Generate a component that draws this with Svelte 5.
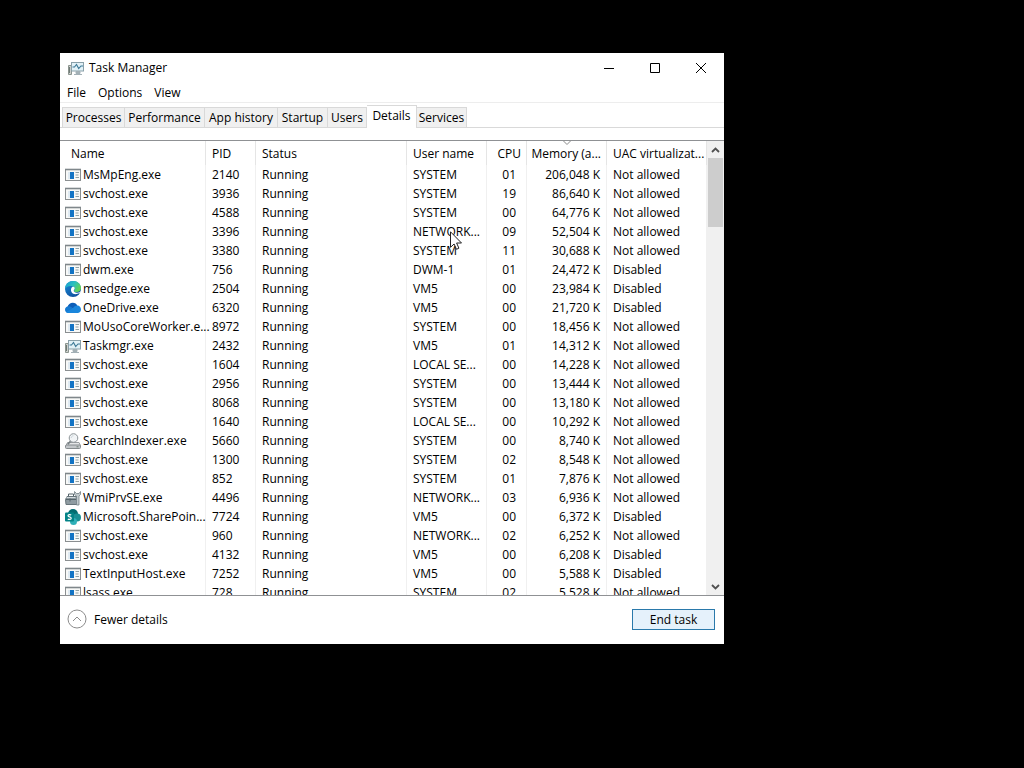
<script>
  const tabs = ['Processes', 'Performance', 'App history', 'Startup', 'Users', 'Details', 'Services'];
  let activeTab = $state('Details');

  const processes = [
    ['app', 'MsMpEng.exe', '2140', 'SYSTEM', '01', '206,048 K', 'Not allowed'],
    ['app', 'svchost.exe', '3936', 'SYSTEM', '19', '86,640 K', 'Not allowed'],
    ['app', 'svchost.exe', '4588', 'SYSTEM', '00', '64,776 K', 'Not allowed'],
    ['app', 'svchost.exe', '3396', 'NETWORK...', '09', '52,504 K', 'Not allowed'],
    ['app', 'svchost.exe', '3380', 'SYSTEM', '11', '30,688 K', 'Not allowed'],
    ['app', 'dwm.exe', '756', 'DWM-1', '01', '24,472 K', 'Disabled'],
    ['edge', 'msedge.exe', '2504', 'VM5', '00', '23,984 K', 'Disabled'],
    ['cloud', 'OneDrive.exe', '6320', 'VM5', '00', '21,720 K', 'Disabled'],
    ['app', 'MoUsoCoreWorker.e...', '8972', 'SYSTEM', '00', '18,456 K', 'Not allowed'],
    ['monitor', 'Taskmgr.exe', '2432', 'VM5', '01', '14,312 K', 'Not allowed'],
    ['app', 'svchost.exe', '1604', 'LOCAL SE...', '00', '14,228 K', 'Not allowed'],
    ['app', 'svchost.exe', '2956', 'SYSTEM', '00', '13,444 K', 'Not allowed'],
    ['app', 'svchost.exe', '8068', 'SYSTEM', '00', '13,180 K', 'Not allowed'],
    ['app', 'svchost.exe', '1640', 'LOCAL SE...', '00', '10,292 K', 'Not allowed'],
    ['search', 'SearchIndexer.exe', '5660', 'SYSTEM', '00', '8,740 K', 'Not allowed'],
    ['app', 'svchost.exe', '1300', 'SYSTEM', '02', '8,548 K', 'Not allowed'],
    ['app', 'svchost.exe', '852', 'SYSTEM', '01', '7,876 K', 'Not allowed'],
    ['tools', 'WmiPrvSE.exe', '4496', 'NETWORK...', '03', '6,936 K', 'Not allowed'],
    ['share', 'Microsoft.SharePoin...', '7724', 'VM5', '00', '6,372 K', 'Disabled'],
    ['app', 'svchost.exe', '960', 'NETWORK...', '02', '6,252 K', 'Not allowed'],
    ['app', 'svchost.exe', '4132', 'VM5', '00', '6,208 K', 'Disabled'],
    ['app', 'TextInputHost.exe', '7252', 'VM5', '00', '5,588 K', 'Disabled'],
    ['app', 'lsass.exe', '728', 'SYSTEM', '02', '5,528 K', 'Not allowed']
  ];
</script>

{#snippet icon(kind)}
  <svg class="icon" viewBox="0 0 16 16" aria-hidden="true">
    {#if kind === 'app'}
      <rect x="0.5" y="2.5" width="15" height="11" fill="#f8f9f8" stroke="#8b8f91" />
      <path d="M0 2.5h16" stroke="#7f878b" stroke-width="1.6" />
      <rect x="5" y="5" width="4" height="7" fill="#1273c4" />
      <rect x="3" y="5" width="2" height="7" fill="#dfeaf2" />
      <path d="M10.5 5.500H14M10.5 8h3M10.5 10.5H14" stroke="#8fa0a4" />
    {:else if kind === 'monitor'}
      <path d="M.5 5.5h3v9h-3z" fill="#cdd0cc" stroke="#8d9691" />
      <path d="M1.5 7v6" stroke="#6f7a75" />
      <rect x="3.5" y="2.5" width="12" height="8.5" fill="#e2f1f7" stroke="#8aa0a9" />
      <path d="M4.5 7h2l2-2.5 2.2 4L13 6h2" fill="none" stroke="#3b7896" stroke-width="1.1" />
      <path d="M8 11.5h4v2H8zM6 14.5h8" fill="#a5b1b6" stroke="#a3b0b6" />
    {:else if kind === 'edge'}
      <defs>
        <linearGradient id="edge-top" x1="0" y1="0" x2="1" y2=".5">
          <stop offset="0" stop-color="#189bd8" /><stop offset=".55" stop-color="#2bc0bd" /><stop offset="1" stop-color="#62d255" />
        </linearGradient>
        <linearGradient id="edge-low" x1="0" y1="0" x2=".7" y2="1">
          <stop offset="0" stop-color="#178ad8" /><stop offset="1" stop-color="#104f9c" />
        </linearGradient>
      </defs>
      <circle cx="8" cy="8" r="8" fill="url(#edge-low)" />
      <path d="M0 7.8C.3 3 4 0 8.2 0 13 0 16 3.4 16 7c0 2.4-2 4.1-4.3 4.1-2 0-2.9-.6-2.7-1.3.1-.5.9-.7.9-1.8C9.9 6.3 8.2 5 5.9 5 3.2 5 .9 6.3 0 7.8Z" fill="url(#edge-top)" />
      <path d="M6.2 7.5c-1 3.3 1.6 6.3 5.3 5.6 1.3-.2 2.300-.6 3.300-1.300L16 11v-.800c-1.600 1.300-3.500 1.700-4.800 1.500-2.200-.3-3-1.600-2.200-2.600 1.100-1 .9-3-.4-3.400-1.100-.2-2 .3-2.400 1.800Z" fill="#fff" />
    {:else if kind === 'cloud'}
      <path d="M2.5 7.2C3 4.3 5.3 2.7 7.8 2.7c2.2 0 3.8 1.2 4.6 3L9 9Z" fill="#0d5eb8" />
      <path d="M0 9.800C0 7.6 1.6 6.3 3.6 6.3c1.5 0 2.5.6 3.5 1.4l5.3 5.3H3.300C1.400 13 0 11.700 0 9.800Z" fill="#1479d1" />
      <path d="M8 8.300c1-1.800 2.600-2.800 4.300-2.700C14.5 5.700 16 7.400 16 9.500c0 2-1.500 3.500-3.400 3.500H3.500c-1 0-1.800-.3-2.400-.9Z" fill="#1a86dc" />
    {:else if kind === 'search'}
      <path d="M2.500 9.500 1 12.500h14.500L14 9.500Z" fill="#e4e6e7" stroke="#9a9fa2" />
      <rect x=".5" y="12" width="15" height="3.500" rx="1" fill="#c3c7ca" stroke="#858b8e" />
      <circle cx="8.500" cy="5" r="4.300" fill="#f1f4f6" stroke="#8d9498" />
      <path d="m5.500 8.200-2.700 3" stroke="#777f83" stroke-width="1.700" />
      <path d="M6.200 5c.1-1.300 1-2.300 2.300-2.300" fill="none" stroke="#cbd4da" />
      <path d="M11.500 13.800h2" stroke="#6f8176" />
    {:else if kind === 'tools'}
      <path d="M2 6.500h11v8H1l-.5-5Z" fill="#8f9ba1" stroke="#68757b" />
      <path d="M3.500 6V4h5v2M1 9.500h11M5 8.500v3" fill="none" stroke="#56646b" />
      <path d="M1.500 7.500h9" stroke="#d3dadd" />
      <path d="M9.500 1.500v3l2 1.500v9h2.500V6l1.500-1.500v-3l-1.500 2h-2.500Z" fill="#c2cacd" stroke="#748087" stroke-width=".8" />
    {:else}
      <circle cx="8" cy="5" r="5" fill="#036c70" />
      <circle cx="12" cy="8.500" r="4" fill="#1a8f94" />
      <circle cx="8.500" cy="12.500" r="3.500" fill="#2fb0b8" />
      <rect x="0" y="3.500" width="9" height="9" rx="1" fill="#038387" />
      <path d="M6.200 6.200C5.500 5.500 3 5.300 3 6.800c0 1.400 3.200.8 3.200 2.400 0 1.500-2.500 1.400-3.400.8" fill="none" stroke="#fff" stroke-width="1.200" />
    {/if}
  </svg>
{/snippet}

<div class="desktop">
  <main class="window">
    <header class="titlebar">
      {@render icon('monitor')}
      <h1>Task Manager</h1>
      <div class="controls">
        <button aria-label="Minimize"><svg viewBox="0 0 12 12"><path d="M1 6.500h10" /></svg></button>
        <button aria-label="Maximize"><svg viewBox="0 0 12 12"><path d="M1.500 1.500h9v9h-9z" /></svg></button>
        <button aria-label="Close"><svg viewBox="0 0 12 12"><path d="m1 1 10 10M11 1 1 11" /></svg></button>
      </div>
    </header>

    <nav class="menu">
      <button>File</button>
      <button>Options</button>
      <button>View</button>
    </nav>

    <div class="tabs" role="tablist">
      {#each tabs as tab}
        <button role="tab" aria-selected={tab === activeTab} class:active={tab === activeTab} onclick={() => (activeTab = tab)}>{tab}</button>
      {/each}
    </div>

    <section class="list">
      <div class="rows">
        <table>
          <colgroup>
            <col class="c-name" /><col class="c-pid" /><col /><col class="c-user" />
            <col class="c-cpu" /><col class="c-mem" /><col class="c-uac" />
          </colgroup>
          <thead>
            <tr>
              <th class="name">Name</th>
              <th>PID</th>
              <th>Status</th>
              <th>User name</th>
              <th class="num">CPU</th>
              <th class="num sorted">Memory (a...<svg class="sort" viewBox="0 0 8 4" aria-hidden="true"><path d="m.5 0 3.500 3.500L7.500 0" /></svg></th>
              <th>UAC virtualizat...</th>
            </tr>
          </thead>
          <tbody>
            {#each processes as [kind, name, pid, user, cpu, memory, uac]}
              <tr>
                <td class="process"><div>{@render icon(kind)}<span>{name}</span></div></td>
                <td>{pid}</td>
                <td>Running</td>
                <td>{user}</td>
                <td class="num cpu">{cpu}</td>
                <td class="num">{memory}</td>
                <td>{uac}</td>
              </tr>
            {/each}
          </tbody>
        </table>
      </div>
      <div class="scrollbar">
        <button aria-label="Scroll up"><svg viewBox="0 0 9 6"><path d="m1 5 3.500-3.500L8 5" /></svg></button>
        <div class="track"><div class="thumb"></div></div>
        <button aria-label="Scroll down"><svg viewBox="0 0 9 6"><path d="m1 1 3.500 3.500L8 1" /></svg></button>
      </div>
    </section>

    <footer>
      <button class="fewer">
        <svg viewBox="0 0 20 20" aria-hidden="true"><circle cx="10" cy="10" r="9" /><path d="m6 12 4-4 4 4" /></svg>
        Fewer details
      </button>
      <button class="end">End task</button>
    </footer>
  </main>

  <svg class="pointer" viewBox="0 0 12 19" aria-hidden="true">
    <path d="M.500.800v15.500L4.100 13l2.400 5.300 2.400-1.100L6.600 12h4.900Z" />
  </svg>
</div>

<style>
  :global(body) {
    margin: 0;
    background: #000;
  }

  .desktop {
    position: relative;
    box-sizing: border-box;
    display: flex;
    height: 100vh;
    padding: 53px 300px 124px 60px;
    background: #000;
    color: #000;
    font: 12px/19px 'Open Sans', 'Noto Sans', sans-serif;
  }

  .window {
    flex: 1;
    min-width: 0;
    display: flex;
    flex-direction: column;
    background: #fff;
  }

  button {
    margin: 0;
    padding: 0;
    border: 0;
    background: none;
    color: inherit;
    font: inherit;
    white-space: nowrap;
  }

  .icon {
    flex: none;
    width: 16px;
    height: 16px;
  }

  .titlebar {
    display: flex;
    align-items: center;
    gap: 5px;
    height: 29px;
    padding-left: 8px;
  }

  h1 {
    margin: 0;
    font: inherit;
  }

  .controls {
    display: flex;
    margin-left: auto;
  }

  .controls button {
    display: grid;
    place-items: center;
    width: 46px;
    height: 29px;
  }

  .controls svg {
    width: 12px;
    height: 12px;
    fill: none;
    stroke: #000;
  }

  .menu {
    display: flex;
    gap: 12px;
    padding: 1px 7px 0;
    height: 19px;
    border-bottom: 1px solid #ededed;
  }

  .tabs {
    display: grid;
    grid-template-columns: 63px 80px 73px 50px 39px 50px 50px 1fr;
    align-items: end;
    height: 22px;
    margin-top: 2px;
    padding-left: 2px;
    border-bottom: 1px solid #d9d9d9;
  }

  .tabs button {
    height: 20px;
    border: solid #d9d9d9;
    border-width: 1px 1px 0 0;
    background: #f0f0f0;
  }

  .tabs button:first-child {
    border-left-width: 1px;
  }

  .tabs .active {
    height: 23px;
    margin-bottom: -1px;
    padding-bottom: 3px;
    background: #fff;
  }

  .list {
    flex: 1;
    min-height: 0;
    display: flex;
    margin-top: 12px;
    border: solid #8f9194;
    border-width: 1px 0;
  }

  .rows {
    flex: 1;
    min-width: 0;
    overflow: hidden;
  }

  table {
    width: 100%;
    table-layout: fixed;
    border-collapse: separate;
    border-spacing: 0;
  }

  .c-name { width: 146px; }
  .c-pid { width: 50px; }
  .c-user { width: 80px; }
  .c-cpu { width: 40px; }
  .c-mem { width: 80px; }
  .c-uac { width: 100px; }

  th,
  td {
    height: 19px;
    padding: 0 0 0 6px;
    border-right: 1px solid #f0f0f0;
    font-weight: 400;
    text-align: left;
    white-space: nowrap;
  }

  th {
    height: 24px;
    border-right-color: #e5e5e5;
  }

  .name {
    padding-left: 11px;
  }

  .num {
    padding: 0 6px 0 0;
    text-align: right;
  }

  th.num {
    padding-right: 5px;
  }

  .cpu {
    padding-right: 10px;
  }

  .process {
    padding-left: 5px;
  }

  .process div {
    display: flex;
    align-items: center;
    gap: 2px;
    height: 19px;
  }

  .sorted {
    position: relative;
  }

  .sort {
    position: absolute;
    top: 0;
    left: calc(50% - 4px);
    width: 8px;
    height: 4px;
    fill: none;
    stroke: #8a8a8a;
  }

  .scrollbar {
    display: flex;
    flex-direction: column;
    width: 17px;
    background: #f0f0f0;
  }

  .scrollbar button {
    display: grid;
    place-items: center;
    height: 17px;
  }

  .scrollbar svg {
    width: 9px;
    height: 6px;
    fill: none;
    stroke: #505050;
    stroke-width: 1.8;
  }

  .track {
    flex: 1;
    padding: 0 1px;
  }

  .thumb {
    height: 16.5%;
    background: #cdcdcd;
  }

  footer {
    box-sizing: border-box;
    display: flex;
    align-items: center;
    justify-content: space-between;
    height: 48px;
    padding: 0 9px 2px 7px;
  }

  .fewer {
    display: flex;
    align-items: center;
    gap: 7px;
  }

  .fewer svg {
    width: 20px;
    height: 20px;
    fill: none;
    stroke: #8c8c8c;
  }

  .end {
    box-sizing: border-box;
    width: 83px;
    height: 21px;
    border: 1px solid #2a79ab;
    background: #e5f1fb;
    line-height: 17px;
  }

  .pointer {
    position: absolute;
    left: 450px;
    top: 231px;
    width: 12px;
    height: 19px;
    fill: #fff;
    stroke: #222;
  }
</style>
